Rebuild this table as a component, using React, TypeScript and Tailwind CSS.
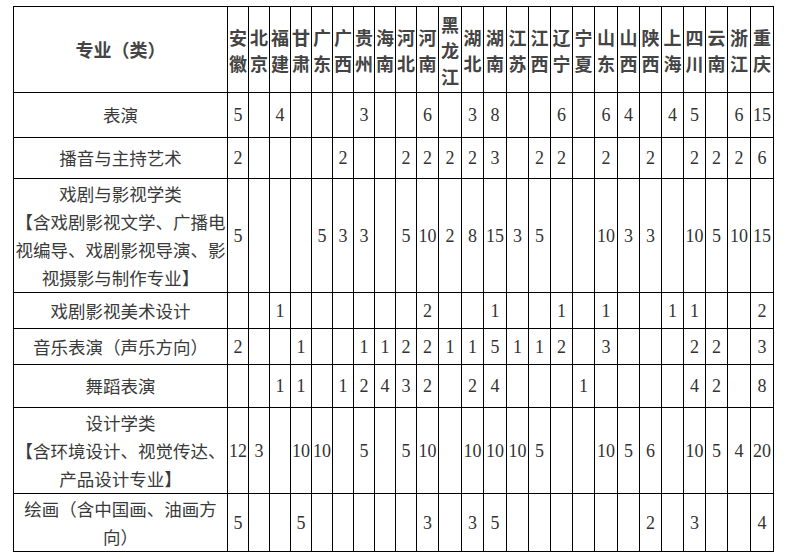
import React from 'react';

const provinces = [
  '安徽', '北京', '福建', '甘肃', '广东', '广西', '贵州', '海南', '河北', '河南',
  '黑龙江', '湖北', '湖南', '江苏', '江西', '辽宁', '宁夏', '山东', '山西', '陕西',
  '上海', '四川', '云南', '浙江', '重庆',
];

const colWidths = [21, 21, 21, 21, 21, 21, 21, 21, 21, 22, 23, 22, 23, 22, 22, 22, 22, 23, 22, 22, 22, 22, 22, 23, 23];

// 每行：专业名称，行高，各省计划数（空字符串表示无）
const rows: { name: React.ReactNode; height: string; values: string[] }[] = [
  {
    name: '表演',
    height: 'h-[45px]',
    values: ['5', '', '4', '', '', '', '3', '', '', '6', '', '3', '8', '', '', '6', '', '6', '4', '', '4', '5', '', '6', '15'],
  },
  {
    name: '播音与主持艺术',
    height: 'h-[41px]',
    values: ['2', '', '', '', '', '2', '', '', '2', '2', '2', '2', '3', '', '2', '2', '', '2', '', '2', '', '2', '2', '2', '6'],
  },
  {
    name: (
      <>
        戏剧与影视学类
        <br />
        【含戏剧影视文学、广播电视编导、戏剧影视导演、影视摄影与制作专业】
      </>
    ),
    height: 'h-[114px]',
    values: ['5', '', '', '', '5', '3', '3', '', '5', '10', '2', '8', '15', '3', '5', '', '', '10', '3', '3', '', '10', '5', '10', '15'],
  },
  {
    name: '戏剧影视美术设计',
    height: 'h-[36px]',
    values: ['', '', '1', '', '', '', '', '', '', '2', '', '', '1', '', '', '1', '', '1', '', '', '1', '1', '', '', '2'],
  },
  {
    name: '音乐表演（声乐方向）',
    height: 'h-[36px]',
    values: ['2', '', '', '1', '', '', '1', '1', '2', '2', '1', '1', '5', '1', '1', '2', '', '3', '', '', '', '2', '2', '', '3'],
  },
  {
    name: '舞蹈表演',
    height: 'h-[43px]',
    values: ['', '', '1', '1', '', '1', '2', '4', '3', '2', '', '2', '4', '', '', '', '1', '', '', '', '', '4', '2', '', '8'],
  },
  {
    name: (
      <>
        设计学类
        <br />
        【含环境设计、视觉传达、产品设计专业】
      </>
    ),
    height: 'h-[86px]',
    values: ['12', '3', '', '10', '10', '', '5', '', '5', '10', '', '10', '10', '10', '5', '', '', '10', '5', '6', '', '10', '5', '4', '20'],
  },
  {
    name: '绘画（含中国画、油画方向）',
    height: 'h-[58px]',
    values: ['5', '', '', '5', '', '', '', '', '', '3', '', '3', '5', '', '', '', '', '', '', '2', '', '3', '', '', '4'],
  },
];

export default function App() {
  return (
    <div className="min-h-[559px] w-[791px] bg-white pl-[13px] pt-[6px]">
      <table className="w-[760px] table-fixed border-collapse border border-black">
        <colgroup>
          <col style={{ width: 214 }} />
          {colWidths.map((w, i) => (
            <col key={i} style={{ width: w }} />
          ))}
        </colgroup>
        <thead>
          <tr className="h-[86px]">
            <th className="border border-black p-0 text-center align-middle font-['Noto_Sans_CJK_SC',sans-serif] text-[18px] font-bold text-[#444]">
              专业（类）
            </th>
            {provinces.map((p) => (
              <th
                key={p}
                className="border border-black p-0 text-center align-middle font-['Noto_Sans_CJK_SC',sans-serif] text-[18px] leading-[26px] font-bold text-[#444]"
              >
                {p}
              </th>
            ))}
          </tr>
        </thead>
        <tbody className="font-['Liberation_Serif','Noto_Sans_CJK_SC',serif] text-[#333]">
          {rows.map((row, r) => (
            <tr key={r} className={row.height}>
              <td className="border border-black px-px py-0 text-center align-middle text-[17.5px] leading-[28px] font-['Noto_Sans_CJK_SC',sans-serif] text-[#3a3a3a]">
                {row.name}
              </td>
              {row.values.map((v, i) => (
                <td key={i} className="border border-black p-0 text-center align-middle text-[18px] leading-[22px]">
                  {v}
                </td>
              ))}
            </tr>
          ))}
        </tbody>
      </table>
    </div>
  );
}
